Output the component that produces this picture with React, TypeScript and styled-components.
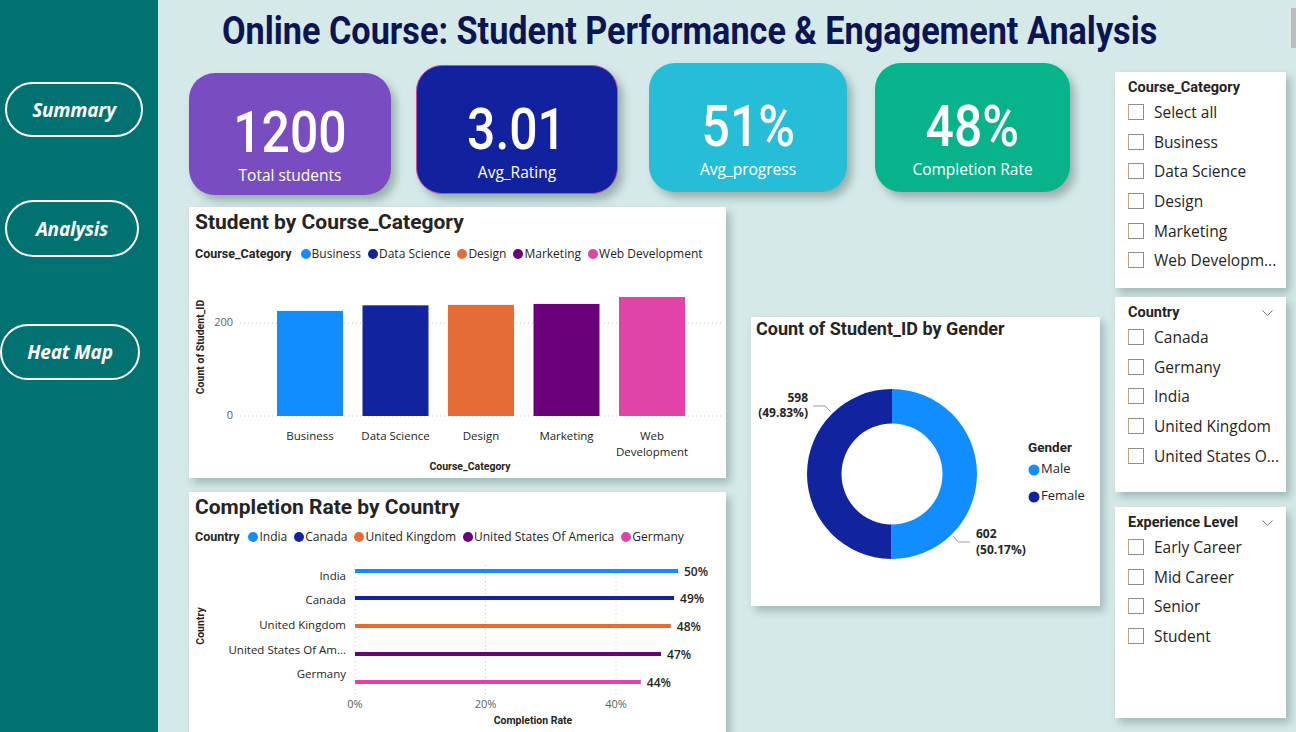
import React from "react";
import styled, { createGlobalStyle } from "styled-components";

const GlobalStyle = createGlobalStyle`
  html, body { margin: 0; padding: 0; background: #d5eae8; }
  body { font-family: "Open Sans", "Noto Sans", sans-serif; overflow: hidden; }
  * { box-sizing: border-box; }
`;

const COL = {
  blue: "#118dff",
  navy: "#12239e",
  orange: "#e66c37",
  purple: "#6b007b",
  pink: "#e044a7",
};

const DIN = `Roboto, "Liberation Sans", sans-serif`;
const UI = `"Open Sans", "Noto Sans", sans-serif`;

const Page = styled.div`
  display: flex;
  width: 1296px;
  height: 732px;
  overflow: hidden;
  background: #d5eae8;
`;

const Sidebar = styled.nav`
  width: 158px;
  flex: none;
  background: #027171;
  display: flex;
  flex-direction: column;
  align-items: flex-start;
`;

const NavButton = styled.button<{ $x: number; $mt: number; $w: number; $h: number }>`
  margin-top: ${(p) => p.$mt}px;
  margin-left: ${(p) => p.$x}px;
  width: ${(p) => p.$w}px;
  height: ${(p) => p.$h}px;
  border: 2.5px solid #ffffff;
  border-radius: 999px;
  background: transparent;
  color: #ffffff;
  font: italic 700 19px ${UI};
  letter-spacing: -0.2px;
  padding: 0;
  cursor: pointer;
`;

const Main = styled.main`
  flex: 1;
  display: flex;
  flex-direction: column;
  padding-left: 31px;
  min-width: 0;
`;

const TitleRow = styled.header`
  height: 63px;
  flex: none;
  display: flex;
  justify-content: space-between;
  align-items: flex-start;
`;

const Title = styled.h1`
  margin: 0;
  padding: 9px 0 0 33px;
  font: 700 38px/44px ${DIN};
  color: #0d1452;
  white-space: nowrap;
  transform: scaleX(0.9);
  transform-origin: 33px 0;
`;

const EdgeTab = styled.div`
  width: 5px;
  height: 40px;
  margin-top: 8px;
  background: #bcbcbc;
`;

const Body = styled.div`
  display: flex;
  flex: 1;
  min-height: 0;
`;

const LeftCol = styled.div`
  width: 911px;
  flex: none;
  display: flex;
  flex-direction: column;
`;

const KpiRow = styled.div`
  display: flex;
  align-items: flex-start;
  height: 132px;
  flex: none;
`;

const KpiCard = styled.div<{
  $bg: string;
  $w: number;
  $h: number;
  $mt: number;
  $ml: number;
  $pt: number;
  $border?: string;
}>`
  width: ${(p) => p.$w}px;
  height: ${(p) => p.$h}px;
  margin-top: ${(p) => p.$mt}px;
  margin-left: ${(p) => p.$ml}px;
  padding-top: ${(p) => p.$pt}px;
  background: ${(p) => p.$bg};
  border: ${(p) => (p.$border ? `1px solid ${p.$border}` : "none")};
  border-radius: 26px;
  box-shadow: 5px 6px 8px rgba(40, 70, 70, 0.35);
  display: flex;
  flex-direction: column;
  align-items: center;
  gap: 4px;
  color: #ffffff;
`;

const KpiValue = styled.div`
  font: 500 58px/58px ${DIN};
  transform: scaleX(0.86);
`;

const KpiLabel = styled.div`
  font: 400 15.5px/20px ${UI};
`;

const ChartsRow = styled.div`
  display: flex;
  margin-top: 12px;
  align-items: flex-start;
`;

const ChartStack = styled.div`
  width: 537px;
  flex: none;
  display: flex;
  flex-direction: column;
  gap: 14px;
`;

const ChartCard = styled.section<{ $h: number }>`
  height: ${(p) => p.$h}px;
  flex: none;
  background: #ffffff;
  box-shadow: 4px 5px 8px rgba(40, 70, 70, 0.3);
  display: flex;
  flex-direction: column;
`;

const ChartTitle = styled.h2`
  margin: 0;
  padding: 3px 0 0 6px;
  font: 700 21px/24px ${DIN};
  color: #252423;
  white-space: nowrap;
`;

const Legend = styled.div<{ $mt: number }>`
  display: flex;
  align-items: center;
  margin: ${(p) => p.$mt}px 0 0 6px;
  height: 14px;
  font: 400 12px/14px ${UI};
  color: #252423;
  white-space: nowrap;
`;

const LegendTitle = styled.span`
  font: 700 12.5px/14px ${DIN};
  margin-right: 9px;
`;

const LegendItem = styled.span`
  display: flex;
  align-items: center;
  margin-right: 7px;
`;

const Dot = styled.span<{ $c: string }>`
  width: 10px;
  height: 10px;
  border-radius: 50%;
  background: ${(p) => p.$c};
  margin-right: 1px;
  flex: none;
`;

const PlotSvg = styled.svg`
  display: block;
  margin-top: 1px;
  flex: none;
`;

const TickText = styled.text`
  font: 400 11px ${UI};
  fill: #605e5c;
`;

const CatText = styled.text`
  font: 400 11.5px ${UI};
  fill: #252423;
`;

const AxisTitle = styled.text`
  font: 700 10.5px ${DIN};
  fill: #252423;
`;

const ValueText = styled.text`
  font: 600 12px ${UI};
  fill: #252423;
`;

const DonutCard = styled.section`
  width: 349px;
  height: 289px;
  margin-left: 25px;
  margin-top: 110px;
  flex: none;
  background: #ffffff;
  box-shadow: 4px 5px 8px rgba(40, 70, 70, 0.3);
  display: flex;
  flex-direction: column;
`;

const DonutTitle = styled.h2`
  margin: 0;
  padding: 1px 0 0 5px;
  font: 700 18px/22px ${DIN};
  color: #252423;
  white-space: nowrap;
`;

const DataLabel = styled.text`
  font: 700 12px ${UI};
  fill: #252423;
`;

const LegendHead = styled.text`
  font: 700 13.5px ${DIN};
  fill: #252423;
`;

const LegendText = styled.text`
  font: 400 13px ${UI};
  fill: #252423;
`;

const SlicerCol = styled.aside`
  width: 171px;
  margin-left: 15px;
  padding-top: 9px;
  flex: none;
  display: flex;
  flex-direction: column;
`;

const Slicer = styled.section<{ $h: number; $mt: number }>`
  height: ${(p) => p.$h}px;
  margin-top: ${(p) => p.$mt}px;
  flex: none;
  background: #ffffff;
  box-shadow: 4px 5px 8px rgba(40, 70, 70, 0.3);
  padding: 6px 13px 0 13px;
`;

const SlicerHeader = styled.div`
  display: flex;
  justify-content: space-between;
  align-items: center;
  height: 19px;
  font: 700 14.5px/19px ${DIN};
  color: #252423;
`;

const SlicerRow = styled.label`
  display: flex;
  align-items: center;
  height: 29.7px;
  font: 400 15.5px/20px ${UI};
  color: #252423;
  white-space: nowrap;
`;

const Box = styled.span`
  width: 16px;
  height: 16px;
  border: 1px solid #8f8d8b;
  border-left-color: #c8a27f;
  margin-right: 10px;
  flex: none;
  background: #ffffff;
`;

const barData = [
  { name: "Business", v: 226, c: COL.blue },
  { name: "Data Science", v: 238, c: COL.navy },
  { name: "Design", v: 239, c: COL.orange },
  { name: "Marketing", v: 241, c: COL.purple },
  { name: "Web Development", v: 256, c: COL.pink },
];

const countryData = [
  { name: "India", short: "India", v: 49.5, label: "50%", c: COL.blue },
  { name: "Canada", short: "Canada", v: 48.9, label: "49%", c: COL.navy },
  { name: "United Kingdom", short: "United Kingdom", v: 48.4, label: "48%", c: COL.orange },
  {
    name: "United States Of America",
    short: "United States Of Am...",
    v: 46.9,
    label: "47%",
    c: COL.purple,
  },
  { name: "Germany", short: "Germany", v: 43.8, label: "44%", c: COL.pink },
];

function BarChart() {
  const base = 154;
  const k = 93 / 200;
  return (
    <PlotSvg width={537} height={216} viewBox="0 0 537 216">
      <AxisTitle
        x={0}
        y={0}
        textAnchor="middle"
        dominantBaseline="middle"
        transform="translate(12 85) rotate(-90)"
      >
        Count of Student_ID
      </AxisTitle>
      {[0, 200].map((t) => (
        <g key={t}>
          <line
            x1={51}
            x2={533}
            y1={base - t * k}
            y2={base - t * k}
            stroke="#c8c6c4"
            strokeDasharray="1 3"
          />
          <TickText x={44} y={base - t * k} textAnchor="end" dominantBaseline="middle">
            {t}
          </TickText>
        </g>
      ))}
      {barData.map((d, i) => {
        const x = 88 + i * 85.5;
        const h = d.v * k;
        const cx = x + 33;
        const words = d.name === "Web Development" ? ["Web", "Development"] : [d.name];
        return (
          <g key={d.name}>
            <rect x={x} y={base - h} width={66} height={h} fill={d.c} />
            {words.map((w, j) => (
              <CatText key={w} x={cx} y={175 + j * 16} textAnchor="middle" dominantBaseline="middle">
                {w}
              </CatText>
            ))}
          </g>
        );
      })}
      <AxisTitle x={281} y={205} textAnchor="middle" dominantBaseline="middle">
        Course_Category
      </AxisTitle>
    </PlotSvg>
  );
}

function CountryChart() {
  const x0 = 166;
  const k = 6.525;
  const barY = [26, 53, 81, 109, 137];
  const labY = [32, 56, 81, 106, 130];
  return (
    <PlotSvg width={537} height={200} viewBox="0 0 537 200">
      <AxisTitle
        x={0}
        y={0}
        textAnchor="middle"
        dominantBaseline="middle"
        transform="translate(12 81) rotate(-90)"
      >
        Country
      </AxisTitle>
      {[0, 20, 40].map((t) => (
        <g key={t}>
          <line
            x1={x0 + t * k}
            x2={x0 + t * k}
            y1={20}
            y2={150}
            stroke="#c8c6c4"
            strokeDasharray="1 3"
          />
          <TickText x={x0 + t * k} y={160} textAnchor="middle" dominantBaseline="middle">
            {t}%
          </TickText>
        </g>
      ))}
      {countryData.map((d, i) => {
        const end = x0 + d.v * k;
        return (
          <g key={d.name}>
            <rect x={x0} y={barY[i] - 2} width={end - x0} height={4} fill={d.c} />
            <CatText x={157} y={labY[i]} textAnchor="end" dominantBaseline="middle">
              {d.short}
            </CatText>
            <ValueText x={end + 6} y={barY[i] + 2} dominantBaseline="middle">
              {d.label}
            </ValueText>
          </g>
        );
      })}
      <AxisTitle x={344} y={176} textAnchor="middle" dominantBaseline="middle">
        Completion Rate
      </AxisTitle>
    </PlotSvg>
  );
}

function ringPath(cx: number, cy: number, r0: number, r1: number, a0: number, a1: number) {
  const p = (r: number, a: number) => [cx + r * Math.sin(a), cy - r * Math.cos(a)];
  const large = a1 - a0 > Math.PI ? 1 : 0;
  const [ox0, oy0] = p(r1, a0);
  const [ox1, oy1] = p(r1, a1);
  const [ix1, iy1] = p(r0, a1);
  const [ix0, iy0] = p(r0, a0);
  return `M${ox0} ${oy0} A${r1} ${r1} 0 ${large} 1 ${ox1} ${oy1} L${ix1} ${iy1} A${r0} ${r0} 0 ${large} 0 ${ix0} ${iy0} Z`;
}

function DonutChart() {
  const cx = 141;
  const cy = 133;
  const male = 602;
  const total = 1200;
  const split = (male / total) * Math.PI * 2;
  return (
    <PlotSvg width={349} height={266} viewBox="0 0 349 266">
      <path d={ringPath(cx, cy, 50.5, 85, 0, split)} fill={COL.blue} />
      <path d={ringPath(cx, cy, 50.5, 85, split, Math.PI * 2)} fill={COL.navy} />
      <polyline points="62,65 74,65 80,71" fill="none" stroke="#a19f9d" strokeWidth={1} />
      <polyline points="202,195 207,201 219,201" fill="none" stroke="#a19f9d" strokeWidth={1} />
      <DataLabel x={57} y={58} textAnchor="end" dominantBaseline="middle">
        598
      </DataLabel>
      <DataLabel x={57} y={73} textAnchor="end" dominantBaseline="middle">
        (49.83%)
      </DataLabel>
      <DataLabel x={225} y={194} dominantBaseline="middle">
        602
      </DataLabel>
      <DataLabel x={225} y={210} dominantBaseline="middle">
        (50.17%)
      </DataLabel>
      <LegendHead x={277} y={107} dominantBaseline="middle">
        Gender
      </LegendHead>
      <circle cx={283} cy={129} r={5.5} fill={COL.blue} />
      <LegendText x={290} y={129} dominantBaseline="middle">
        Male
      </LegendText>
      <circle cx={283} cy={156} r={5.5} fill={COL.navy} />
      <LegendText x={290} y={156} dominantBaseline="middle">
        Female
      </LegendText>
    </PlotSvg>
  );
}

function Chevron() {
  return (
    <svg width="11" height="6" viewBox="0 0 11 6">
      <polyline points="0.5,0.5 5.5,5.5 10.5,0.5" fill="none" stroke="#7a7876" strokeWidth={1} />
    </svg>
  );
}

const kpis = [
  { v: "1200", l: "Total students", bg: "#7a4cc1", w: 202, h: 122, mt: 10, ml: 0, pt: 30 },
  { v: "3.01", l: "Avg_Rating", bg: "#12229f", w: 202, h: 129, mt: 2, ml: 25, pt: 34, border: "#c0509f" },
  { v: "51%", l: "Avg_progress", bg: "#26bdd7", w: 198, h: 129, mt: 0, ml: 31, pt: 34 },
  { v: "48%", l: "Completion Rate", bg: "#06b38a", w: 195, h: 129, mt: 0, ml: 28, pt: 34 },
];

const slicers = [
  {
    title: "Course_Category",
    chevron: false,
    h: 216,
    mt: 0,
    items: ["Select all", "Business", "Data Science", "Design", "Marketing", "Web Developm..."],
  },
  {
    title: "Country",
    chevron: true,
    h: 195,
    mt: 9,
    items: ["Canada", "Germany", "India", "United Kingdom", "United States O..."],
  },
  {
    title: "Experience Level",
    chevron: true,
    h: 211,
    mt: 15,
    items: ["Early Career", "Mid Career", "Senior", "Student"],
  },
];

export default function App() {
  return (
    <>
      <GlobalStyle />
      <Page>
        <Sidebar>
          <NavButton $x={5} $mt={82} $w={138} $h={55}>
            Summary
          </NavButton>
          <NavButton $x={5} $mt={63} $w={134} $h={57}>
            Analysis
          </NavButton>
          <NavButton $x={0} $mt={67} $w={140} $h={56}>
            Heat Map
          </NavButton>
        </Sidebar>
        <Main>
          <TitleRow>
            <Title>Online Course: Student Performance &amp; Engagement Analysis</Title>
            <EdgeTab />
          </TitleRow>
          <Body>
            <LeftCol>
              <KpiRow>
                {kpis.map((k) => (
                  <KpiCard
                    key={k.l}
                    $bg={k.bg}
                    $w={k.w}
                    $h={k.h}
                    $mt={k.mt}
                    $ml={k.ml}
                    $pt={k.pt}
                    $border={k.border}
                  >
                    <KpiValue>{k.v}</KpiValue>
                    <KpiLabel>{k.l}</KpiLabel>
                  </KpiCard>
                ))}
              </KpiRow>
              <ChartsRow>
                <ChartStack>
                  <ChartCard $h={271}>
                    <ChartTitle>Student by Course_Category</ChartTitle>
                    <Legend $mt={13}>
                      <LegendTitle>Course_Category</LegendTitle>
                      {barData.map((d) => (
                        <LegendItem key={d.name}>
                          <Dot $c={d.c} />
                          {d.name}
                        </LegendItem>
                      ))}
                    </Legend>
                    <BarChart />
                  </ChartCard>
                  <ChartCard $h={250}>
                    <ChartTitle>Completion Rate by Country</ChartTitle>
                    <Legend $mt={11}>
                      <LegendTitle>Country</LegendTitle>
                      {countryData.map((d) => (
                        <LegendItem key={d.name}>
                          <Dot $c={d.c} />
                          {d.name}
                        </LegendItem>
                      ))}
                    </Legend>
                    <CountryChart />
                  </ChartCard>
                </ChartStack>
                <DonutCard>
                  <DonutTitle>Count of Student_ID by Gender</DonutTitle>
                  <DonutChart />
                </DonutCard>
              </ChartsRow>
            </LeftCol>
            <SlicerCol>
              {slicers.map((s) => (
                <Slicer key={s.title} $h={s.h} $mt={s.mt}>
                  <SlicerHeader>
                    <span>{s.title}</span>
                    {s.chevron && <Chevron />}
                  </SlicerHeader>
                  {s.items.map((it) => (
                    <SlicerRow key={it}>
                      <Box />
                      {it}
                    </SlicerRow>
                  ))}
                </Slicer>
              ))}
            </SlicerCol>
          </Body>
        </Main>
      </Page>
    </>
  );
}
